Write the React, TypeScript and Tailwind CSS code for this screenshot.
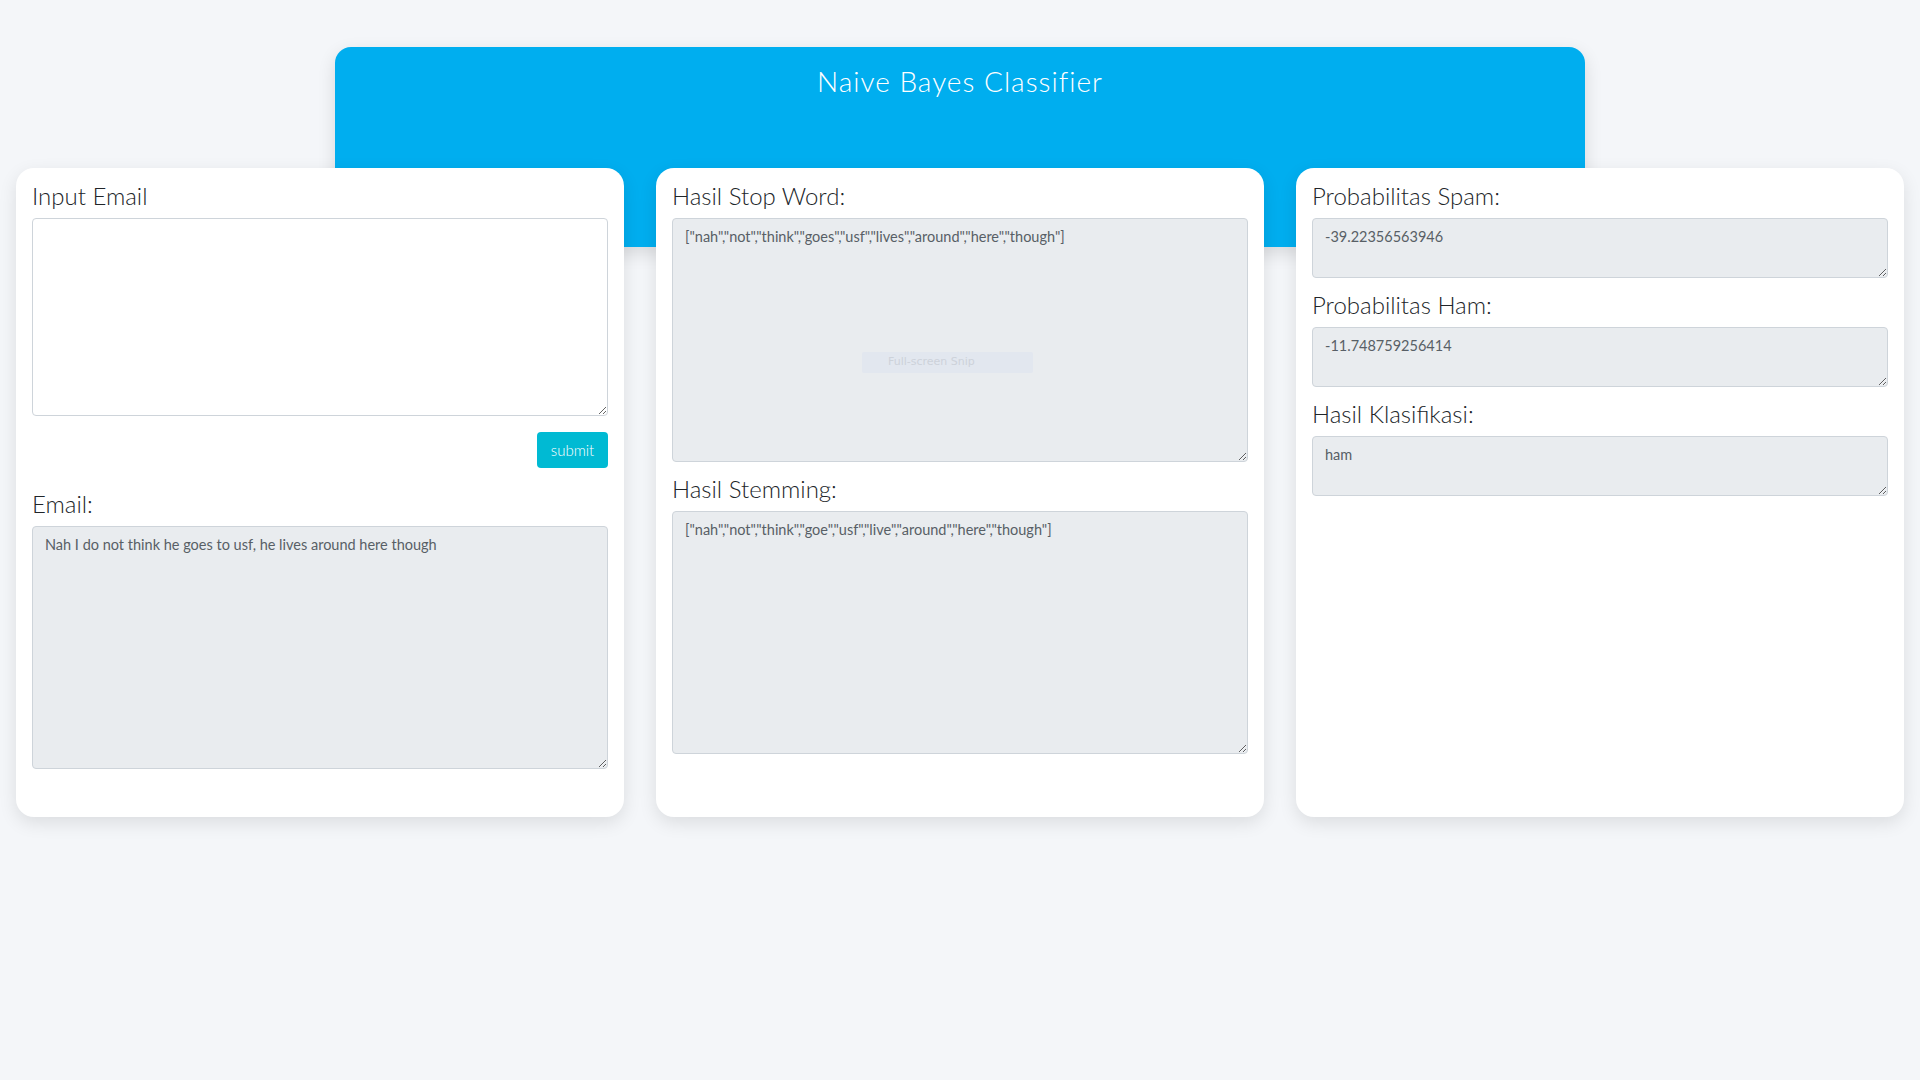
import React from 'react';

const stopWords = '["nah","not","think","goes","usf","lives","around","here","though"]';
const stemmed = '["nah","not","think","goe","usf","live","around","here","though"]';

const labelCls = 'block text-[24px] leading-[28px] font-light text-[#212529] mb-2';
const readCls =
  'block w-full rounded-[4px] border border-[#ced4da] bg-[#e9ecef] px-3 pt-[7px] pb-[6px] text-[14.5px] leading-[21px] text-[#585f66] outline-none';

const Field: React.FC<{ label: string; value: string; h: string; className?: string; children?: React.ReactNode }> = ({
  label,
  value,
  h,
  className,
  children,
}) => (
  <div className={className}>
    <label className={labelCls}>{label}</label>
    <div className="relative">
      <textarea readOnly value={value} className={`${readCls} ${h}`} />
      {children}
    </div>
  </div>
);

const Card: React.FC<{ children: React.ReactNode }> = ({ children }) => (
  <div className="h-[649px] rounded-[18px] bg-white px-4 pt-[14px] shadow-[0_6px_18px_rgba(0,0,0,0.1)]">{children}</div>
);

export default function App() {
  return (
    <div className="min-h-screen bg-[#f4f6f9] pt-[47px] font-['Lato',sans-serif]">
      {/* header band */}
      <div className="mx-auto h-[200px] w-[1250px] rounded-[16px] bg-[#00aeef] pt-[17px] shadow-[0_6px_18px_rgba(0,0,0,0.12)]">
        <h1 className="text-center text-[28px] leading-[34px] font-light tracking-[1px] text-white">Naive Bayes Classifier</h1>
      </div>

      <div className="relative -mt-[79px] grid grid-cols-3 gap-8 px-4">
        {/* input */}
        <Card>
          <label className={labelCls}>Input Email</label>
          <textarea className="block h-[198px] w-full rounded-[4px] border border-[#ced4da] bg-white px-3 py-[6px] text-[14.5px] text-[#585f66] outline-none" />
          <div className="mt-4 flex justify-end">
            <button className="h-[36px] w-[71px] rounded-[4px] bg-[#00bad3] text-[15px] font-light text-white">submit</button>
          </div>
          <Field
            className="mt-[22px]"
            label="Email:"
            h="h-[243px]"
            value="Nah I do not think he goes to usf, he lives around here though"
          />
        </Card>

        {/* preprocessing */}
        <Card>
          <Field label="Hasil Stop Word:" h="h-[244px]" value={stopWords}>
            <div className="absolute left-[190px] top-[134px] flex h-[21px] w-[171px] items-center rounded-[2px] bg-[#e2e7ef] pl-[26px] font-['DejaVu_Sans',sans-serif] text-[11px] text-[#cdd2da]">
              Full-screen Snip
            </div>
          </Field>
          <Field className="mt-[13px]" label="Hasil Stemming:" h="h-[243px]" value={stemmed} />
        </Card>

        {/* result */}
        <Card>
          <Field label="Probabilitas Spam:" h="h-[60px]" value="-39.22356563946" />
          <Field className="mt-[13px]" label="Probabilitas Ham:" h="h-[60px]" value="-11.748759256414" />
          <Field className="mt-[13px]" label="Hasil Klasifikasi:" h="h-[60px]" value="ham" />
        </Card>
      </div>
    </div>
  );
}
